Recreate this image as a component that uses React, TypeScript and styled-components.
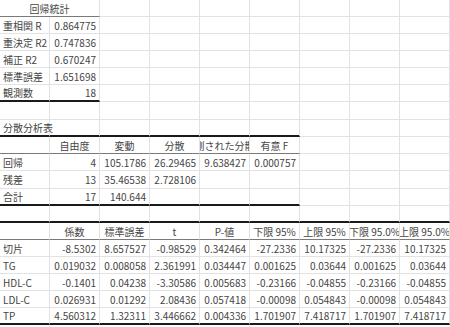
import styled, { createGlobalStyle } from 'styled-components';

const GlobalStyle = createGlobalStyle`
  html, body {
    margin: 0;
    padding: 0;
    background: #fff;
  }
`;

const Sheet = styled.div`
  width: 450px;
  font-family: "Noto Sans CJK JP", "Noto Sans", sans-serif;
  font-size: 10px;
  color: #454545;
`;

const Row = styled.div<{ $h: number }>`
  display: grid;
  grid-template-columns: repeat(9, 50px);
  height: ${p => p.$h}px;
`;

type Align = 'left' | 'right' | 'center';
type Edge = 'thin' | 'thick';

const Cell = styled.div<{ $align: Align; $edge?: Edge; $span: number }>`
  grid-column: span ${p => p.$span};
  box-sizing: border-box;
  display: flex;
  align-items: center;
  justify-content: ${p => (p.$align === 'left' ? 'flex-start' : p.$align === 'right' ? 'flex-end' : 'center')};
  padding: ${p => (p.$align === 'left' ? '1px 0 0 3px' : p.$align === 'right' ? '1px 3px 0 0' : '1px 0 0 0')};
  overflow: ${p => (p.$align === 'left' ? 'visible' : 'hidden')};
  white-space: nowrap;
  border-right: 1px solid #e2e2e2;
  border-bottom: ${p =>
    p.$edge === 'thick' ? '2px solid #1a1a1a' : p.$edge === 'thin' ? '1px solid #7a7a7a' : '1px solid #e2e2e2'};
  line-height: 1;
`;

type C = { t?: string; a?: Align; e?: Edge; s?: number };

const num = (t: string, e?: Edge): C => ({ t, a: 'right', e });
const lab = (t: string, e?: Edge): C => ({ t, a: 'left', e });
const hd = (t: string): C => ({ t, a: 'center', e: 'thin' });

// pad a row out to 9 columns; the first `upTo` columns get the edge
const fill = (cells: C[], e?: Edge, upTo = 9): C[] => {
  const out = [...cells];
  let used = out.reduce((n, c) => n + (c.s ?? 1), 0);
  while (used < 9) {
    out.push({ e: used < upTo ? e : undefined });
    used++;
  }
  return out;
};

const line = (label: string, values: string[], e?: Edge): C[] => [lab(label, e), ...values.map(v => num(v, e))];

const rows: { h: number; cells: C[] }[] = [
  { h: 17, cells: fill([{ t: '回帰統計', a: 'center', e: 'thin', s: 2 }]) },
  { h: 17, cells: fill(line('重相関 R', ['0.864775'])) },
  { h: 17, cells: fill(line('重決定 R2', ['0.747836'])) },
  { h: 17, cells: fill(line('補正 R2', ['0.670247'])) },
  { h: 17, cells: fill(line('標準誤差', ['1.651698'])) },
  { h: 17, cells: fill(line('観測数', ['18'], 'thick')) },
  { h: 18, cells: fill([]) },
  { h: 17, cells: fill([lab('分散分析表', 'thick')], 'thick', 6) },
  { h: 17, cells: fill([hd(''), hd('自由度'), hd('変動'), hd('分散'), hd('観測された分散比'), hd('有意 F')]) },
  { h: 17, cells: fill(line('回帰', ['4', '105.1786', '26.29465', '9.638427', '0.000757'])) },
  { h: 18, cells: fill(line('残差', ['13', '35.46538', '2.728106'])) },
  { h: 17, cells: fill(line('合計', ['17', '140.644'], 'thick'), 'thick', 6) },
  { h: 17, cells: fill([], 'thick') },
  {
    h: 17,
    cells: [hd(''), hd('係数'), hd('標準誤差'), hd('t'), hd('P-値'), hd('下限 95%'), hd('上限 95%'), hd('下限 95.0%'), hd('上限 95.0%')],
  },
  { h: 17, cells: line('切片', ['-8.5302', '8.657527', '-0.98529', '0.342464', '-27.2336', '10.17325', '-27.2336', '10.17325']) },
  { h: 17, cells: line('TG', ['0.019032', '0.008058', '2.361991', '0.034447', '0.001625', '0.03644', '0.001625', '0.03644']) },
  { h: 17, cells: line('HDL-C', ['-0.1401', '0.04238', '-3.30586', '0.005683', '-0.23166', '-0.04855', '-0.23166', '-0.04855']) },
  { h: 17, cells: line('LDL-C', ['0.026931', '0.01292', '2.08436', '0.057418', '-0.00098', '0.054843', '-0.00098', '0.054843']) },
  {
    h: 17,
    cells: line('TP', ['4.560312', '1.32311', '3.446662', '0.004336', '1.701907', '7.418717', '1.701907', '7.418717'], 'thick'),
  },
];

export default function App() {
  return (
    <>
      <GlobalStyle />
      <Sheet>
        {rows.map((r, i) => (
          <Row key={i} $h={r.h}>
            {r.cells.map((c, j) => (
              <Cell key={j} $align={c.a ?? 'left'} $edge={c.e} $span={c.s ?? 1}>
                {c.t}
              </Cell>
            ))}
          </Row>
        ))}
      </Sheet>
    </>
  );
}
